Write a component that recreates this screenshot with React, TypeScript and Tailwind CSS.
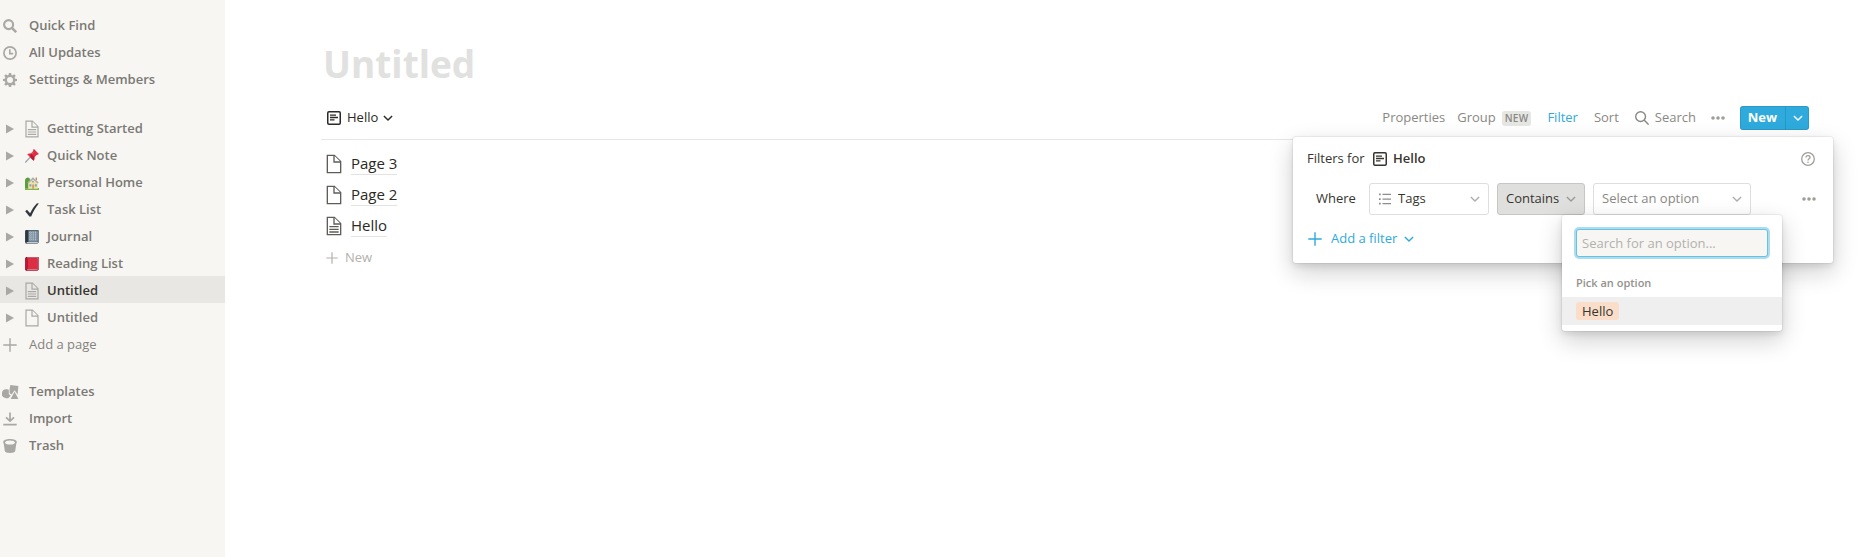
import React from "react";

type IconProps = { className?: string };

const SearchBold = ({ className }: IconProps) => (
  <svg viewBox="0 0 14 14" className={className} fill="none" stroke="currentColor">
    <circle cx="5.6" cy="5.6" r="4.5" strokeWidth="2.1" />
    <path d="M8.9 8.9 13.2 13.2" strokeWidth="2.5" />
  </svg>
);

const SearchThin = ({ className }: IconProps) => (
  <svg viewBox="0 0 14 14" className={className} fill="none" stroke="currentColor" strokeWidth="1.4">
    <circle cx="5.6" cy="5.6" r="4.9" />
    <path d="M9.1 9.1 13.6 13.6" />
  </svg>
);

const Clock = ({ className }: IconProps) => (
  <svg viewBox="0 0 14 14" className={className} fill="none" stroke="currentColor" strokeWidth="1.7">
    <circle cx="7" cy="7" r="6.1" />
    <path d="M6.8 3.2V7.6H10.2" strokeWidth="1.6" />
  </svg>
);

const TEETH = [0, 45, 90, 135, 180, 225, 270, 315];

const Gear = ({ className }: IconProps) => (
  <svg viewBox="0 0 14 14" className={className}>
    <circle cx="7" cy="7" r="4.1" fill="none" stroke="currentColor" strokeWidth="2.2" />
    {TEETH.map((a) => (
      <path key={a} d="M5.4 2.6 5.9 0H8.1L8.6 2.6Z" fill="currentColor" transform={`rotate(${a} 7 7)`} />
    ))}
  </svg>
);

const PageIcon = ({ className, lines }: IconProps & { lines?: boolean }) => (
  <svg viewBox="0 0 30 30" className={className} fill="currentColor">
    <path
      d={
        "M16,1H4v28h22V11L16,1z M16,3l8,8h-8V3z M24,27H6V3h8v10h10V27z" +
        (lines ? " M8,17h14v-2H8V17z M8,21h14v-2H8V21z M8,25h14v-2H8V25z" : "")
      }
    />
  </svg>
);

const Triangle = ({ className }: IconProps) => (
  <svg viewBox="0 0 8 10" className={className} fill="currentColor">
    <path d="M0 0.4 8 5 0 9.6Z" />
  </svg>
);

const Plus = ({ className }: IconProps) => (
  <svg viewBox="0 0 14 14" className={className} fill="none" stroke="currentColor" strokeWidth="1.4">
    <path d="M7 .3V13.7M.3 7H13.7" />
  </svg>
);

const Chevron = ({ className }: IconProps) => (
  <svg viewBox="0 0 10 10" className={className} fill="none" stroke="currentColor" strokeWidth="1.4">
    <path d="M.9 2.9 5 7.1 9.1 2.9" />
  </svg>
);

const Dots = ({ className }: IconProps) => (
  <svg viewBox="0 0 14 4" className={className} fill="currentColor">
    <circle cx="2" cy="2" r="1.8" />
    <circle cx="7" cy="2" r="1.8" />
    <circle cx="12" cy="2" r="1.8" />
  </svg>
);

const ViewIcon = ({ className }: IconProps) => (
  <svg viewBox="0 0 14 14" className={className} fill="none" stroke="currentColor">
    <rect x=".75" y=".75" width="12.5" height="12.5" rx="1.2" strokeWidth="1.5" />
    <path d="M3 4.1H9M3 6.5H11M3 8.9H7.5" strokeWidth="1.3" />
  </svg>
);

const ListIcon = ({ className }: IconProps) => (
  <svg viewBox="0 0 14 12" className={className} fill="currentColor">
    <path d="M1 .6h1.7v1.7H1zM1 5.2h1.7v1.7H1zM1 9.7h1.7v1.7H1zM4.5 .8H13v1.3H4.5zM4.5 5.4H13v1.3H4.5zM4.5 9.9H13v1.3H4.5z" />
  </svg>
);

const Templates = ({ className }: IconProps) => (
  <svg viewBox="0 0 17 14" className={className} fill="currentColor">
    <path d="M8.3 0 16.4 1.1 15.6 9.6 12.6 5.2 9.7 9.5 7.6 8.2V4.2Z" />
    <path d="M4.9 4.3A4.6 4.6 0 0 1 6.8 4.7V9.2L8.6 10.2A4.5 4.5 0 1 1 4.9 4.3Z" />
    <path d="M12.6 6.8 16.4 14H8.6Z" />
  </svg>
);

const Import = ({ className }: IconProps) => (
  <svg viewBox="0 0 14 14" className={className} fill="none" stroke="currentColor" strokeWidth="1.7">
    <path d="M7 .5V9M3 5.4 7 9.2 11 5.4M.3 12.6H13.7" />
  </svg>
);

const Trash = ({ className }: IconProps) => (
  <svg viewBox="0 0 14 14" className={className}>
    <path
      d="M.2 3C.2 1.2 3.2 0 7 0S13.8 1.2 13.8 3C13.8 3.8 13.6 4.4 13.2 5L12.2 12C12 13.3 9.9 14 7 14S2 13.3 1.8 12L.8 5C.4 4.4.2 3.8.2 3Z"
      fill="currentColor"
    />
    <ellipse cx="7" cy="3.5" rx="4.8" ry="2" fill="#f7f6f3" />
  </svg>
);

const Help = ({ className }: IconProps) => (
  <svg viewBox="0 0 14 14" className={className} fill="none" stroke="currentColor" strokeWidth="1.3">
    <circle cx="7" cy="7" r="6.3" />
    <path d="M5 5.6C5 4.4 5.8 3.7 7 3.7S9 4.4 9 5.4C9 6.8 7 6.8 7 8.4" />
    <circle cx="7" cy="10.2" r=".8" fill="currentColor" stroke="none" />
  </svg>
);

const Pushpin = ({ className }: IconProps) => (
  <svg viewBox="0 0 14 14" className={className}>
    <path d="M5.4 8 .2 13.6" stroke="#9aa8b3" strokeWidth="1.3" />
    <path d="M2.2 5.2C3.4 4.2 4.9 4.3 5.7 4.6L8.2 2.1C8 1.2 8.4.5 9 .1L13.9 5C13.4 5.6 12.7 5.9 11.8 5.8L9.4 8.2C9.8 9.4 9.6 10.8 8.7 11.8Z" fill="#dd2e44" />
    <path d="M5.7 4.6 9.4 8.2 8.7 11.8 5.3 8.4Z" fill="#be1931" />
    <path d="M8.4 3.2 6.6 5" stroke="#f4798a" strokeWidth=".8" />
  </svg>
);

const House = ({ className }: IconProps) => (
  <svg viewBox="0 0 14 14" className={className}>
    <path d="M0 13.8V4.2C.4 1.6 3 1 4.6 2.2L6 7V13.8Z" fill="#5c9d3c" />
    <path d="M0 12H14V14H0Z" fill="#7db84f" />
    <path d="M3.2 7 8 2.6 12.8 7V12.8H3.2Z" fill="#f3dfa8" />
    <path d="M8 1.2 13.8 6.6 12.8 7.6 8 3.4 3.2 7.6 2.3 6.6Z" fill="#a9b0b0" />
    <path d="M10.6 1.4H12V4.6L10.6 3.4Z" fill="#c98a5a" />
    <path d="M4.4 8.2H6.4V10.4H4.4ZM9.8 8.2H11.8V10.4H9.8ZM7.2 4.9H8.8V6.6H7.2Z" fill="#6fa8cf" />
    <path d="M7.2 8.6H9V12.8H7.2Z" fill="#d29a5c" />
  </svg>
);

const Check = ({ className }: IconProps) => (
  <svg viewBox="0 0 14 14" className={className}>
    <path d="M.2 8.3 2 6.8 5.1 10.2C7 6.3 9.2 3 12 .2L13.8.6C10.6 4.4 8.4 8.6 6.2 13.4H4.4Z" fill="#31373d" />
  </svg>
);

const Notebook = ({ className }: IconProps) => (
  <svg viewBox="0 0 14 14" className={className}>
    <path d="M1.6 0H12.8C13.4 0 13.8.4 13.8 1V12.6L12.4 13.8H1.6C.8 13.8.2 13.2.2 12.4V1.4C.2.6.8 0 1.6 0Z" fill="#5a6872" />
    <path d="M2 12.2H12.8V13.1H2Z" fill="#e1e8ed" />
    <path d="M3.6 1.2H12.6V11.6H3.6Z" fill="#7d92a2" />
    <path d="M4 2.6H12.4M4 4.8H12.4M4 7H12.4M4 9.2H12.4M5.6 1.4V11.4M8 1.4V11.4M10.4 1.4V11.4" stroke="#c5d2dc" strokeWidth=".7" strokeDasharray="1 1" />
    <path d="M.2 1.4C.2.6.8 0 1.6 0H3.2V12H1.4L.2 12.6Z" fill="#31373d" />
  </svg>
);

const RedBook = ({ className }: IconProps) => (
  <svg viewBox="0 0 14 14" className={className}>
    <path d="M1.8 0H13.2L13.8 .6V12.6L12.4 13.8H1.8C.8 13.8.2 13.2.2 12.2V1.6C.2.6.8 0 1.8 0Z" fill="#a0041e" />
    <path d="M2 .5H13V1.3H2ZM12.6 1.3H13.3V12H12.6Z" fill="#e8b8c0" />
    <path d="M2 12.3H12.6V13.1H2Z" fill="#e1c8cd" />
    <path d="M2.8 1.4H12.4V12.2H2.8Z" fill="#dd2e44" />
    <path d="M.2 2C.2 1.4.8 1.4 1.4 1.4H2.8V12.2H1.2L.2 12.6Z" fill="#be1931" />
  </svg>
);

const navTop = [
  { label: "Quick Find", Icon: SearchBold },
  { label: "All Updates", Icon: Clock },
  { label: "Settings & Members", Icon: Gear },
];

const navBottom = [
  { label: "Templates", Icon: Templates },
  { label: "Import", Icon: Import },
  { label: "Trash", Icon: Trash },
];

const LinedPage = ({ className }: IconProps) => <PageIcon className={className} lines />;

const pages: { label: string; Icon: React.FC<IconProps>; page?: boolean; active?: boolean }[] = [
  { label: "Getting Started", Icon: LinedPage, page: true },
  { label: "Quick Note", Icon: Pushpin },
  { label: "Personal Home", Icon: House },
  { label: "Task List", Icon: Check },
  { label: "Journal", Icon: Notebook },
  { label: "Reading List", Icon: RedBook },
  { label: "Untitled", Icon: LinedPage, page: true, active: true },
  { label: "Untitled", Icon: PageIcon, page: true },
];

const listItems = [
  { label: "Page 3", lines: false },
  { label: "Page 2", lines: false },
  { label: "Hello", lines: true },
];

function NavItem({ label, Icon }: { label: string; Icon: React.FC<IconProps> }) {
  return (
    <a href="#" className="flex h-[27px] items-center gap-[9px] pt-px">
      <span className="flex w-5 shrink-0 justify-center text-[#a9a8a4]">
        <Icon className={Icon === Templates ? "h-3.5 w-[17px]" : "size-3.5"} />
      </span>
      {label}
    </a>
  );
}

function Sidebar() {
  return (
    <nav className="flex w-[225px] shrink-0 flex-col gap-[21px] bg-[#f7f6f3] pt-3 text-[13px] font-semibold text-[#7b7974]">
      <div>
        {navTop.map((n) => (
          <NavItem key={n.label} {...n} />
        ))}
      </div>
      <div>
        {pages.map(({ label, Icon, page, active }, i) => (
          <div
            key={i}
            className={`flex h-[27px] items-center pt-0.5 pl-[6px] ${active ? "bg-[#e8e7e4] text-[#37352f]" : ""}`}
          >
            <button type="button" aria-label="Expand" className="text-[#a9a8a4]">
              <Triangle className="h-2.5 w-2" />
            </button>
            <a href="#" className="flex items-center gap-[6px] pl-[9px]">
              <span className="flex w-[18px] justify-center text-[#a9a8a4]">
                <Icon className={page ? "size-[18px]" : "size-3.5"} />
              </span>
              {label}
            </a>
          </div>
        ))}
        <button type="button" className="flex h-[27px] items-center gap-[9px] pt-0.5 font-medium text-[#85837e]">
          <span className="flex w-5 justify-center text-[#a9a8a4]">
            <Plus className="size-3.5" />
          </span>
          Add a page
        </button>
      </div>
      <div>
        {navBottom.map((n) => (
          <NavItem key={n.label} {...n} />
        ))}
      </div>
    </nav>
  );
}

function OptionMenu() {
  return (
    <div className="absolute top-full left-1/2 w-[220px] -translate-x-1/2 rounded-[3px] bg-white pt-3.5 pb-1.5 shadow-[0_0_0_1px_rgba(15,15,15,0.05),0_3px_6px_rgba(15,15,15,0.1),0_9px_24px_rgba(15,15,15,0.2)]">
      <div className="px-3.5">
        <input
          type="text"
          aria-label="Search for an option"
          placeholder="Search for an option..."
          className="h-7 w-full rounded-[3px] bg-[#f7f6f3] px-1.5 text-[13px] shadow-[inset_0_0_0_1px_rgba(46,170,220,0.7),0_0_0_2px_rgba(46,170,220,0.4)] outline-none placeholder:text-[#b3b1ac]"
        />
      </div>
      <div className="mt-4 mb-1 px-3.5 text-[11px] leading-5 font-semibold text-[#94928e]">Pick an option</div>
      <button type="button" className="flex h-7 w-full items-center bg-[#efefef] px-3.5 text-left">
        <span className="rounded-[3px] bg-[#fadec9] px-1.5 text-[13px] leading-[18px] text-[#37352f]">Hello</span>
      </button>
    </div>
  );
}

function FilterPanel() {
  return (
    <div className="absolute top-[38px] -right-6 w-[540px] rounded-[3px] bg-white px-3.5 pt-2 pb-2.5 text-[13px] text-[#37352f] shadow-[0_0_0_1px_rgba(15,15,15,0.05),0_3px_6px_rgba(15,15,15,0.1),0_9px_24px_rgba(15,15,15,0.2)]">
      <div className="flex h-7 items-center justify-between pr-1">
        <div className="flex items-center">
          <span className="w-[66px]">Filters for</span>
          <ViewIcon className="mr-1.5 size-3.5" />
          <span className="font-semibold">Hello</span>
        </div>
        <button type="button" aria-label="Help" className="text-[#a09e9a]">
          <Help className="size-3.5" />
        </button>
      </div>
      <div className="mt-2.5 flex h-8 items-center gap-2 pr-[3px] pl-[9px]">
        <span className="w-[45px]">Where</span>
        <div className="relative h-8 w-[120px]">
          <ListIcon className="pointer-events-none absolute top-[10px] left-[9px] h-3 w-3.5 text-[#8f8d89]" />
          <select
            aria-label="Property"
            className="h-full w-full appearance-none rounded-[3px] border border-[#dededd] bg-transparent pl-7 text-[13px] outline-none"
          >
            <option>Tags</option>
          </select>
          <Chevron className="pointer-events-none absolute top-[11px] right-[9px] size-2.5 text-[#b0aeaa]" />
        </div>
        <div className="relative h-8 w-[88px]">
          <select
            aria-label="Condition"
            className="h-full w-full appearance-none rounded-[3px] border border-[#c6c6c5] bg-[#dfdfde] pl-2 text-[13px] outline-none"
          >
            <option>Contains</option>
          </select>
          <Chevron className="pointer-events-none absolute top-[11px] right-[9px] size-2.5 text-[#9b9a97]" />
        </div>
        <div className="relative h-8 w-[158px]">
          <button
            type="button"
            aria-haspopup="listbox"
            aria-expanded="true"
            className="flex h-full w-full items-center justify-between rounded-[3px] border border-[#dededd] px-2 text-[#8a8884]"
          >
            Select an option
            <Chevron className="size-2.5 text-[#b0aeaa]" />
          </button>
          <OptionMenu />
        </div>
        <button type="button" aria-label="Filter actions" className="ml-auto text-[#a09e9a]">
          <Dots className="h-1 w-3.5" />
        </button>
      </div>
      <button type="button" className="mt-2.5 flex h-7 items-center pl-px font-medium text-[#2eaadc]">
        <Plus className="mr-[9px] size-3.5" />
        Add a filter
        <Chevron className="ml-[7px] size-2.5" />
      </button>
    </div>
  );
}

export default function App() {
  return (
    <div className="flex min-h-screen bg-white font-['Open_Sans','Noto_Sans',sans-serif] text-[#37352f]">
      <Sidebar />
      <main className="min-w-0 flex-1 pt-10 pr-[58px] pl-24">
        <h1 className="pl-0.5 text-[37px] leading-[48px] font-bold text-[#e1e1df]">Untitled</h1>
        <div className="relative mt-[11px] flex h-[41px] items-center justify-between border-b border-[#e6e6e5] pb-0.5">
          <button type="button" className="flex h-7 items-center pl-1.5 text-[13px] font-medium text-[#2b2924]">
            <ViewIcon className="mr-1.5 size-3.5" />
            Hello
            <Chevron className="ml-[5px] size-2.5" />
          </button>
          <div className="flex items-center text-[13px] text-[#8a8884]">
            <button type="button">Properties</button>
            <button type="button" className="ml-3 flex items-center gap-1.5">
              Group
              <span className="rounded-[3px] bg-[#e6e6e3] px-[3px] text-[10px] leading-[15px] font-semibold tracking-wide">NEW</span>
            </button>
            <button type="button" className="ml-4 text-[#2eaadc]">Filter</button>
            <button type="button" className="ml-4">Sort</button>
            <button type="button" className="ml-4 flex items-center gap-1.5">
              <SearchThin className="size-3.5" />
              Search
            </button>
            <button type="button" aria-label="More" className="ml-[15px] text-[#a09e9a]">
              <Dots className="h-1 w-3.5" />
            </button>
            <div className="ml-[15px] flex h-6 overflow-hidden rounded-[3px] bg-[#2eaadc] text-white shadow-[inset_0_0_0_1px_rgba(15,15,15,0.1)]">
              <button type="button" className="w-[46px] border-r border-[#2698c6] font-bold">New</button>
              <button type="button" aria-label="New options" className="flex w-[23px] items-center justify-center">
                <Chevron className="size-2.5" />
              </button>
            </div>
          </div>
          <FilterPanel />
        </div>
        <ul className="pt-2">
          {listItems.map(({ label, lines }) => (
            <li key={label} className="flex h-[31px] items-center gap-[7px] pl-[3px]">
              <PageIcon lines={lines} className="size-5 text-[#5f5d58]" />
              <a href="#" className="border-b border-[#e3e3e2] text-[15px] leading-[22px] font-medium text-[#2b2924]">
                {label}
              </a>
            </li>
          ))}
        </ul>
        <button type="button" className="flex h-[34px] items-center gap-[7px] pl-[5px] text-[13px] text-[#b3b1ac]">
          <Plus className="size-3" />
          New
        </button>
      </main>
    </div>
  );
}
